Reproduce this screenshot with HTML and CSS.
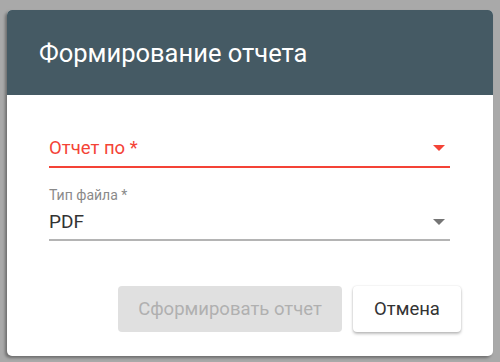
FILE: index.html
```html
<!DOCTYPE html>
<html lang="ru">
<head>
<meta charset="utf-8">
<link rel="stylesheet" href="styles.css">
</head>
<body>
<div class="dialog">
  <div class="dialog-header">Формирование отчета</div>
  <div class="dialog-body">
    <div class="select select-error">
      <span class="select-text">Отчет по *</span>
      <span class="arrow arrow-red"></span>
    </div>
    <div class="field">
      <div class="field-label">Тип файла *</div>
      <div class="select select-normal">
        <span class="select-value">PDF</span>
        <span class="arrow arrow-gray"></span>
      </div>
    </div>
  </div>
  <div class="dialog-actions">
    <button class="btn btn-disabled" disabled>Сформировать отчет</button>
    <button class="btn btn-cancel">Отмена</button>
  </div>
</div>
</body>
</html>
```
FILE: styles.css
```css
html, body {
  margin: 0;
  padding: 0;
}
body {
  width: 500px;
  height: 362px;
  background: #a9a9a9;
  box-sizing: border-box;
  padding: 10px 7px 0 7px;
  font-family: Roboto, "Liberation Sans", Arial, sans-serif;
  overflow: hidden;
}
.dialog {
  width: 486px;
  height: 346px;
  background: #fff;
  border-radius: 5px;
  overflow: hidden;
  box-shadow: -2px 2px 3px rgba(0,0,0,0.35);
  display: flex;
  flex-direction: column;
}
.dialog-header {
  height: 85px;
  background: #455a64;
  color: #fff;
  font-size: 25.5px;
  display: flex;
  align-items: center;
  padding-left: 32px;
  padding-top: 1px;
  box-sizing: border-box;
  flex-shrink: 0;
}
.dialog-body {
  padding: 35px 43px 0 42px;
}
.select {
  position: relative;
  display: flex;
  align-items: center;
}
.select-error {
  height: 36px;
  border-bottom: 2px solid #f44336;
}
.select-text {
  color: #f44336;
  font-size: 18.5px;
}
.field {
  margin-top: 19px;
}
.field-label {
  color: #8a8a8a;
  font-size: 14px;
  line-height: 16px;
}
.select-normal {
  height: 36px;
  border-bottom: 2px solid #b4b4b4;
}
.select-value {
  color: #333;
  font-size: 19px;
}
.arrow {
  position: absolute;
  right: 5px;
  width: 0;
  height: 0;
  border-left: 6px solid transparent;
  border-right: 6px solid transparent;
  border-top: 6px solid #f44336;
}
.arrow-red {
  top: 15px;
  border-top-color: #f44336;
}
.arrow-gray {
  top: 16px;
  border-top-color: #757575;
}
.dialog-actions {
  display: flex;
  justify-content: flex-end;
  gap: 11px;
  padding: 45px 32px 0 0;
}
.btn {
  height: 46px;
  border: none;
  border-radius: 4px;
  font-family: Roboto, "Liberation Sans", Arial, sans-serif;
  font-size: 18.5px;
  padding: 0;
}
.btn-disabled {
  width: 224px;
  background: #e0e0e0;
  color: #b0b0b0;
}
.btn-cancel {
  width: 108px;
  background: #fff;
  color: #333;
  box-shadow: 0 2px 3px rgba(0,0,0,0.25), 0 0 2px rgba(0,0,0,0.12);
}
```
